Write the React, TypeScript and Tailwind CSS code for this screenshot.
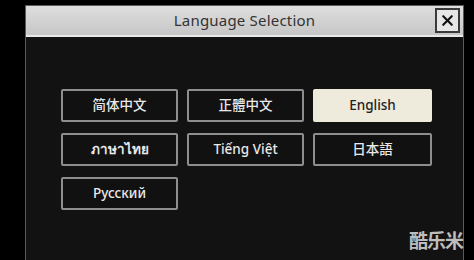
import { X } from 'lucide-react'

const languages = ['简体中文', '正體中文', 'English', 'ภาษาไทย', 'Tiếng Việt', '日本語', 'Русский']

export default function App() {
  const selected = 'English'

  return (
    <div
      className="relative w-[474px] h-[260px] overflow-hidden bg-black pt-[5px] pl-[25px]"
      style={{ fontFamily: '"Noto Sans", "Noto Sans CJK SC", sans-serif' }}
    >
      <div className="w-[439px] h-[270px] border border-[#5a5a5a] bg-[#121212]">
        <div className="relative h-[31px] flex items-center justify-center bg-gradient-to-b from-[#dedede] to-[#c6c6c6] border-b-2 border-[#e8e8e8]">
          <span className="text-[15px] text-[#333] tracking-[0.2px]">Language Selection</span>
          <button className="absolute right-[3px] top-[2px] w-[25px] h-[25px] flex items-center justify-center border-2 border-[#3a3a3a] bg-[#e6e6e6]">
            <X className="w-[17px] h-[17px] text-[#111]" strokeWidth={3} />
          </button>
        </div>

        <div className="grid grid-cols-[117px_117px_119px] gap-x-[9px] gap-y-[11px] pt-[52px] pl-[35px]">
          {languages.map((lang) => (
            <button
              key={lang}
              className={`h-[33px] rounded-[2px] flex items-center justify-center text-[13.5px] ${
                lang === 'ภาษาไทย' ? 'font-semibold' : 'font-medium'
              } ${
                lang === selected
                  ? 'bg-[#eeeadc] text-[#222] border-2 border-[#eeeadc]'
                  : 'bg-[#111] text-[#e8e8e8] border-2 border-[#8e8e8e]'
              }`}
            >
              {lang}
            </button>
          ))}
        </div>
      </div>

      <div className="absolute right-[11px] bottom-[9px] text-[19px] font-bold leading-none text-[#bdbdbd] tracking-[-1px]">
        酷乐米
      </div>
    </div>
  )
}
